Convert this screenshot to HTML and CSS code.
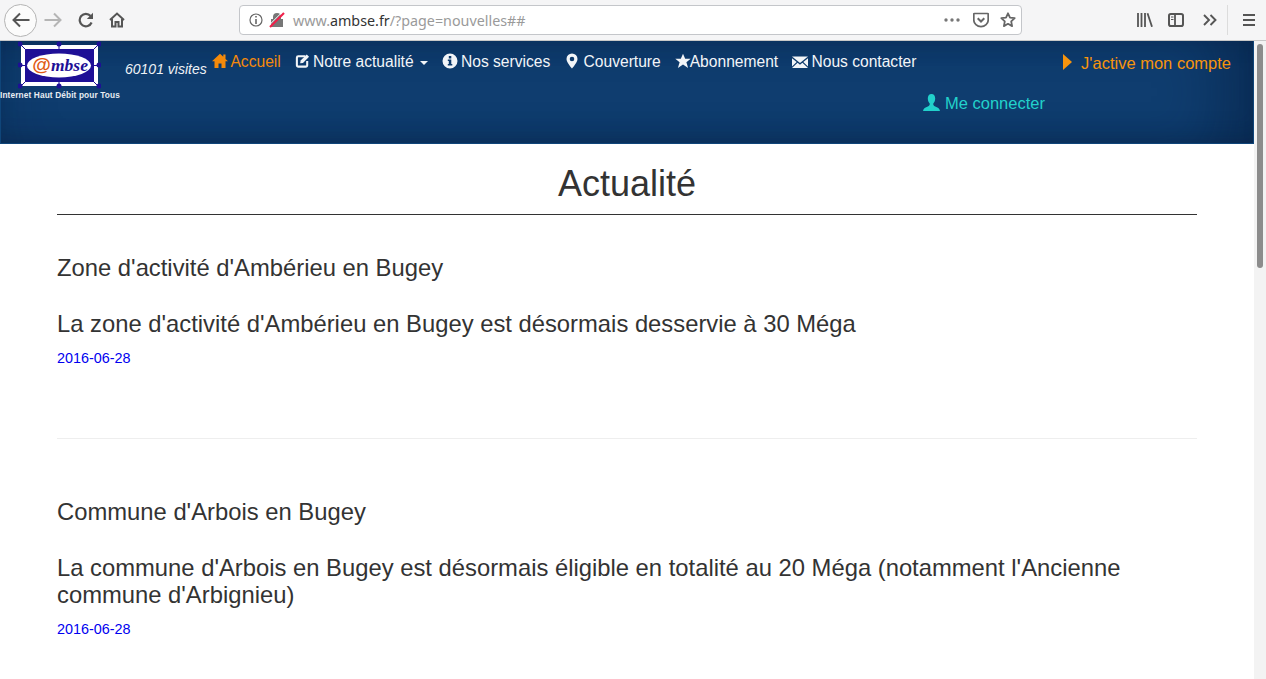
FILE: index.html
```html
<!DOCTYPE html>
<html lang="fr">
<head>
<meta charset="utf-8">
<title>Actualité</title>
<link rel="stylesheet" href="styles.css">
</head>
<body>
<div class="toolbar">
  <div class="back-btn">
    <svg class="ti" viewBox="0 0 18 16" width="18" height="16"><path d="M8 1.500 1.500 8 8 14.500M2 8h15.500" fill="none" stroke="#555" stroke-width="2"/></svg>
  </div>
  <svg class="fwd" viewBox="0 0 18 16" width="18" height="16"><path d="M10 1.500 16.500 8 10 14.500M16 8H.5" fill="none" stroke="#b5b5b5" stroke-width="2"/></svg>
  <svg class="reload" viewBox="0 0 16 16" width="16" height="16"><path d="M13.600 10.500A6.200 6.200 0 1 1 12.600 4" fill="none" stroke="#555" stroke-width="2.200"/><path d="M15 .8V7H8.800z" fill="#555"/></svg>
  <svg class="home" viewBox="0 0 16 16" width="16" height="16"><path d="M1 8 8 1.500 15 8M3 7v7.500h3.500V10h3v4.500H13V7" fill="none" stroke="#555" stroke-width="2"/></svg>
  <div class="urlbar">
    <svg class="info" viewBox="0 0 14 14" width="14" height="14"><circle cx="7" cy="7" r="6" fill="none" stroke="#666" stroke-width="1.200"/><path d="M6.200 3h1.600v1.600H6.200zM6.200 6h1.600v5H6.200z" fill="#666"/></svg>
    <svg class="lock" viewBox="0 0 16 16" width="16" height="16"><path d="M4 7V5a4 4 0 0 1 8 0v2h2v8H2V7z" fill="#777"/><path d="M1 15 15 1" stroke="#f0204a" stroke-width="2.200"/><path d="M1 12.300 12.300 1" stroke="#fff" stroke-width="1"/></svg>
    <div class="url"><span class="dim">www.</span><span class="dom">ambse.fr</span><span class="dim">/?page=nouvelles##</span></div>
    <svg class="dots" viewBox="0 0 16 4" width="16" height="4"><circle cx="2" cy="2" r="1.700" fill="#777"/><circle cx="8" cy="2" r="1.700" fill="#777"/><circle cx="14" cy="2" r="1.700" fill="#777"/></svg>
    <svg class="pocket" viewBox="0 0 16 16" width="16" height="16"><path d="M1.500 1.500h13a.7.7 0 0 1 .7.7V8a7 6.500 0 0 1-14.400 0V2.200a.7.7 0 0 1 .7-.7z" fill="none" stroke="#666" stroke-width="1.700"/><path d="m4.700 6.300 3.300 3.200 3.300-3.200" fill="none" stroke="#666" stroke-width="2"/></svg>
    <svg class="bstar" viewBox="0 0 16 16" width="16" height="16"><path d="m8 1.300 2 4.300 4.700.6-3.500 3.200.9 4.700L8 11.800l-4.100 2.300.9-4.700L1.300 6.200 6 5.600z" fill="none" stroke="#666" stroke-width="1.800" stroke-linejoin="round"/></svg>
  </div>
  <svg class="library" viewBox="0 0 16 14" width="16" height="14"><path d="M1 0v14M4.500 0v14M8 0v14M10.500 .3l4.500 13.500" fill="none" stroke="#555" stroke-width="1.800"/></svg>
  <svg class="sidebar" viewBox="0 0 16 14" width="16" height="14"><rect x="1" y="1" width="14" height="12" rx="1.800" fill="none" stroke="#555" stroke-width="2"/><path d="M7 1v12" stroke="#555" stroke-width="1.800"/><path d="M3 4h2.500M3 6.500h2.500" stroke="#555" stroke-width="1.200"/></svg>
  <svg class="chev" viewBox="0 0 14 12" width="14" height="12"><path d="m1 1 5 5-5 5M7.500 1l5 5-5 5" fill="none" stroke="#555" stroke-width="1.900"/></svg>
  <div class="sep"></div>
  <svg class="menu" viewBox="0 0 12 12" width="12" height="12"><path d="M0 1h12M0 6h12M0 11h12" stroke="#555" stroke-width="1.800"/></svg>
</div>
<div class="viewport">
  <div class="page">
    <header class="navbar">
      <div class="brand">
        <svg class="logo" viewBox="0 0 83 48" width="83" height="48">
          <rect x="3" y="4" width="77" height="41" fill="#fff"/>
          <rect x="7" y="8" width="69" height="33" fill="#1e0f96"/>
          <path d="M3 4 7 8M80 4l-4 4M3 45l4-4M80 45l-4-4" stroke="#1e0f96" stroke-width="1"/>
          <path d="M41 4v4M41 41v4M3 24.500h4M76 24.500h4" stroke="#1e0f96" stroke-width="1"/>
          <ellipse cx="41" cy="24.500" rx="32" ry="12" fill="#fff"/>
          <text class="logo-at" x="14" y="30">@</text>
          <text class="logo-name" x="33" y="30">mbse</text>
          <g fill="#1e0f96">
            <circle cx="2" cy="3" r="2.500"/><circle cx="41" cy="3" r="2.500"/><circle cx="81" cy="3" r="2.500"/>
            <circle cx="2" cy="24" r="2.500"/><circle cx="81" cy="24" r="2.500"/>
            <circle cx="2" cy="45" r="2.500"/><circle cx="41" cy="45" r="2.500"/><circle cx="81" cy="45" r="2.500"/>
          </g>
        </svg>
        <div class="tagline">Internet Haut Débit pour Tous</div>
      </div>
      <div class="visits">60101 visites</div>
      <nav class="nav">
        <a class="nav-item active"><svg class="ic" viewBox="0 0 16 16" width="16" height="16"><path d="M8 .8 0 8.300h2.500V15h4v-4.500h3V15h4V8.300H16l-2.500-2.400V1.500h-2.200v2.300z" fill="currentColor"/></svg> Accueil</a>
        <a class="nav-item"><svg class="ic" viewBox="0 0 16 16" width="15" height="16"><path d="M11 3H3.500A1.500 1.500 0 0 0 2 4.500v8A1.500 1.500 0 0 0 3.500 14h8a1.500 1.500 0 0 0 1.500-1.500V8" fill="none" stroke="currentColor" stroke-width="2.200"/><path d="m6 7.500 6.500-6.500 2.500 2.500L8.500 10 5.500 10.500z" fill="currentColor"/></svg> Notre actualité<span class="caret"></span></a>
        <a class="nav-item"><svg class="ic" viewBox="0 0 16 16" width="16" height="16"><path fill-rule="evenodd" d="M8 .5a7.500 7.500 0 1 1 0 15 7.500 7.500 0 0 1 0-15zM6.800 3v2.500h2.500V3zM5.800 6.500V8h1v3h-1v1.500h4.500V11h-1V6.500z" fill="currentColor"/></svg> Nos services</a>
        <a class="nav-item"><svg class="ic" viewBox="0 0 16 16" width="16" height="16"><path fill-rule="evenodd" d="M8 .5a5.500 5.500 0 0 1 5.500 5.500C13.500 9.500 8 15.500 8 15.500S2.500 9.500 2.500 6A5.500 5.500 0 0 1 8 .5zM8 3.700A2.300 2.300 0 1 0 8 8.300 2.300 2.300 0 0 0 8 3.700z" fill="currentColor"/></svg> Couverture</a>
        <a class="nav-item"><svg class="ic" viewBox="0 0 16 16" width="16" height="16"><path d="m8 .8 2.200 5h5.500l-4.300 3.500 1.700 5.700L8 11.600 2.900 15l1.700-5.700L.3 5.800h5.500z" fill="currentColor"/></svg>Abonnement</a>
        <a class="nav-item"><svg class="ic" viewBox="0 0 16 14" width="16" height="14"><path d="M0 1.500h16L8 8zM0 3.200 4.700 7 0 11.500zM16 3.200 11.300 7 16 11.500zM5.600 7.800 8 9.800l2.400-2L16 13H0z" fill="currentColor"/></svg> Nous contacter</a>
      </nav>
      <div class="account">
        <div class="account-row first">
          <a class="activate"><svg class="tri" viewBox="0 0 9 16" width="9" height="16"><path d="M0 0 9 8 0 16z" fill="currentColor"/></svg>J'active mon compte</a>
        </div>
        <div class="account-row">
          <a class="login"><svg class="ic login-ic" viewBox="0 0 17 17" width="17" height="17"><path d="M8.500 0C6 0 4.800 2 4.800 4.500c0 2.500 1.200 4.300 2 5.200 0 1.300-.5 2-2 2.700C2.500 13.300.4 14.200 0 17h17c-.4-2.800-2.500-3.700-4.800-4.600-1.500-.7-2-1.400-2-2.700.8-.9 2-2.700 2-5.200C12.200 2 11 0 8.500 0z" fill="currentColor"/></svg> Me connecter</a>
        </div>
      </div>
    </header>
    <main class="content">
      <h1 class="page-title">Actualité</h1>
      <article class="news">
        <h3>Zone d'activité d'Ambérieu en Bugey</h3>
        <h3>La zone d'activité d'Ambérieu en Bugey est désormais desservie à 30 Méga</h3>
        <div class="date">2016-06-28</div>
      </article>
      <hr class="rule">
      <article class="news">
        <h3>Commune d'Arbois en Bugey</h3>
        <h3>La commune d'Arbois en Bugey est désormais éligible en totalité au 20 Méga (notamment l'Ancienne commune d'Arbignieu)</h3>
        <div class="date">2016-06-28</div>
      </article>
    </main>
  </div>
  <div class="scrollbar"><div class="thumb"></div></div>
</div>
</body>
</html>
```
FILE: styles.css
```css
* { box-sizing: border-box; }
html, body { margin: 0; height: 100%; overflow: hidden; }
body { font-family: "Liberation Sans", Arial, sans-serif; color: #333; background: #fff; }

/* browser chrome */
.toolbar {
  height: 41px;
  display: flex;
  align-items: center;
  background: #f5f5f6;
  border-bottom: 1px solid #c8c8c8;
  flex: none;
}
.toolbar svg { flex: none; display: block; }
.back-btn {
  width: 33px; height: 33px;
  margin-left: 4px;
  border: 1px solid #b4b4b4;
  border-radius: 50%;
  background: #fbfbfb;
  display: flex; align-items: center; justify-content: center;
}
.fwd { margin-left: 7px; }
.reload { margin-left: 16px; }
.home { margin-left: 15px; }
.urlbar {
  width: 783px; height: 30px;
  margin-left: 114px;
  background: #fff;
  border: 1px solid #c4c6ca;
  border-radius: 4px;
  display: flex; align-items: center;
}
.info { margin-left: 9px; }
.lock { margin-left: 6px; }
.url { margin-left: 8px; width: 651px; font-family: "Noto Sans", sans-serif; font-size: 14.3px; white-space: nowrap; }
.dim { color: #9a9a9a; }
.dom { color: #333; }
.pocket { margin-left: 13px; }
.bstar { margin-left: 11px; }
.library { margin-left: 115px; }
.sidebar { margin-left: 15px; }
.chev { margin-left: 19px; }
.sep { width: 1px; height: 30px; background: #dcdcdc; margin-left: 10px; }
.menu { margin-left: 15px; }

/* page */
.viewport { display: flex; height: 638px; }
.page { width: 1254px; height: 638px; overflow: hidden; flex: none; }
.scrollbar { width: 12px; background: #f3f3f3; padding: 3px 3px 0; flex: none; }
.thumb { width: 6px; height: 224px; border-radius: 3px; background: #8c8c8c; }

.navbar {
  height: 103px;
  display: flex;
  align-items: flex-start;
  background: #0f3d6f;
  border: solid #0f4579;
  border-width: 0 1px 1px;
  box-shadow:
    inset 0 -18px 24px -12px rgba(5, 25, 55, .3),
    inset -55px 0 55px -20px rgba(5, 25, 55, .4),
    inset 35px 0 45px -20px rgba(5, 25, 55, .15),
    inset 0 16px 22px -14px rgba(5, 25, 55, .25);
}
.brand { width: 124px; flex: none; }
.logo { display: block; margin-left: 17px; }
.logo-at { font: italic bold 19px "Liberation Sans", sans-serif; fill: #e05a14; }
.logo-name { font: italic bold 17.5px "Liberation Serif", serif; fill: #1e0f96; }
.tagline {
  width: 125px;
  margin-left: -1px;
  font-size: 8.3px;
  font-weight: bold;
  letter-spacing: .12px;
  line-height: 12px;
  color: #e8ecf2;
  white-space: nowrap;
}
.visits {
  width: 87px;
  margin-top: 20px;
  font-size: 14px;
  font-style: italic;
  line-height: 16px;
  color: #eef2f6;
  white-space: nowrap;
  flex: none;
}
.nav { display: flex; gap: 14px; margin-top: 12px; flex: none; }
.nav-item { font-size: 15.6px; line-height: 17px; color: #f2f5f8; white-space: nowrap; display: block; }
.nav-item.active { color: #f58a0a; }
.ic { display: inline-block; vertical-align: -2px; margin-right: -1px; }
.login-ic { margin-right: 0; }
.caret {
  display: inline-block;
  width: 0; height: 0;
  margin-left: 6px;
  vertical-align: 2px;
  border-top: 4px solid #f2f5f8;
  border-left: 4px solid transparent;
  border-right: 4px solid transparent;
}
.account { margin-left: 7px; flex: 1; padding-top: 13px; }
.account-row { font-size: 16.5px; line-height: 18px; height: 18px; }
.account-row.first { display: flex; justify-content: flex-end; padding-right: 22px; margin-bottom: 22px; }
.activate { color: #f7940d; white-space: nowrap; }
.tri { display: inline-block; vertical-align: -1px; margin-right: 9px; }
.login { color: #22d1cb; white-space: nowrap; }

.content { padding: 0 57px; }
.page-title {
  margin: 20px 0 0;
  padding-bottom: 10px;
  font-size: 36px;
  font-weight: 400;
  line-height: 40px;
  text-align: center;
  color: #333;
  border-bottom: 1px solid #333;
}
.news { padding-top: 39.5px; }
.news h3 {
  margin: 0 0 30px;
  font-size: 23.8px;
  font-weight: 400;
  line-height: 26.4px;
  color: #333;
}
.news h3:last-of-type { margin-bottom: 11px; }
.date { font-size: 14.4px; line-height: 20px; color: #0000f0; }
.rule { margin: 70px 0 20px; border: 0; border-top: 1px solid #eee; }
```
